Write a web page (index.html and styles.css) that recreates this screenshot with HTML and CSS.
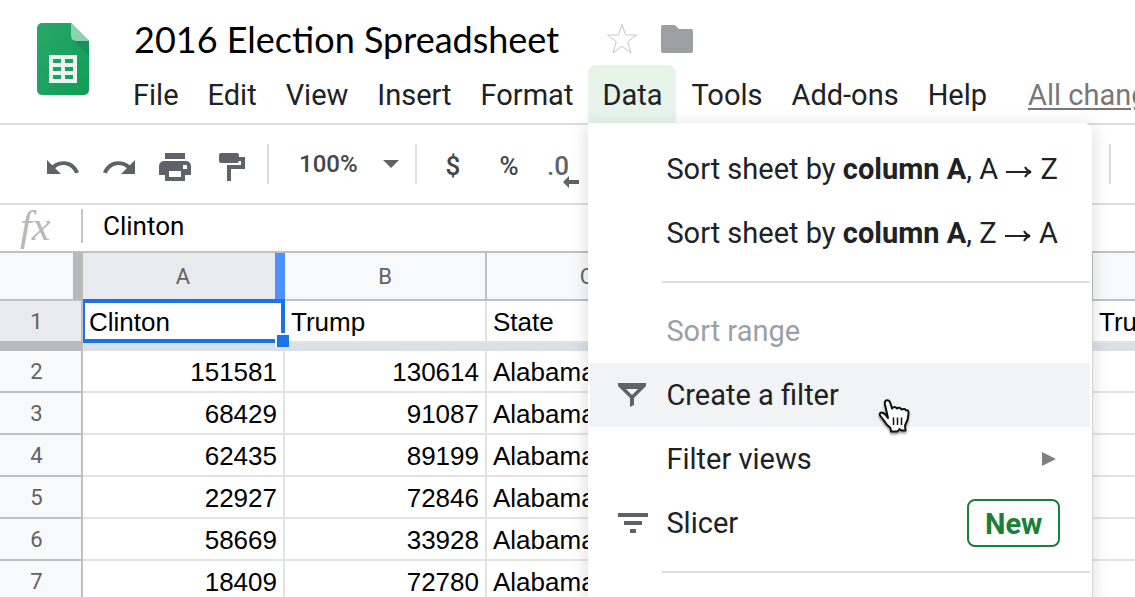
FILE: index.html
```html
<!DOCTYPE html>
<html lang="en">
<head>
<meta charset="utf-8">
<title>2016 Election Spreadsheet</title>
<meta name="viewport" content="width=device-width, initial-scale=1">
<link rel="stylesheet" href="styles.css">
</head>
<body>
<header class="header">
  <a class="logo" href="#" aria-label="Sheets home">
    <svg width="52" height="72" viewBox="0 0 52 72">
      <defs>
        <linearGradient id="sheet" x1="0" y1="0" x2="1" y2="1"><stop offset="0" stop-color="#2aa76a"/><stop offset="1" stop-color="#0f9d58"/></linearGradient>
        <linearGradient id="shade" x1="0" y1="0" x2="1" y2="1"><stop offset="0" stop-color="#1b8560"/><stop offset="1" stop-color="#159a5b"/></linearGradient>
      </defs>
      <path fill="url(#sheet)" d="M5 0H34L52 18V67a5 5 0 0 1-5 5H5a5 5 0 0 1-5-5V5a5 5 0 0 1 5-5z"/>
      <path fill="url(#shade)" d="M35.500 16.500L52 33V18H39z"/>
      <path fill="#8ed1b1" d="M34 0L52 18H39a5 5 0 0 1-5-5z"/>
      <path fill="#f1f1f1" fill-rule="evenodd" d="M12 32H40V60H12zM16 36V40H24V36zM28 36V40H36V36zM16 44V48H24V44zM28 44V48H36V44zM16 52V56H24V52zM28 52V56H36V52z"/>
    </svg>
  </a>
  <div class="header-main">
    <div class="title-row">
      <h1 class="title">2016 Election Spreadsheet</h1>
      <button class="icon-button" aria-label="Star">
        <svg width="32" height="32" viewBox="0 0 32 32" fill="none" stroke="#c6c6c6" stroke-width="1"><path d="M16 1.500L19.500 12H30.500L21.700 18.700L25 30L16 23.200L7 30L10.300 18.700L1.500 12H12.500z"/></svg>
      </button>
      <button class="icon-button" aria-label="Move to folder">
        <svg width="32" height="28" viewBox="0 0 32 28"><path fill="#9e9fa3" d="M2 0H14L18 4H30a2 2 0 0 1 2 2V26a2 2 0 0 1-2 2H2a2 2 0 0 1-2-2V2a2 2 0 0 1 2-2z"/></svg>
      </button>
    </div>
    <nav class="menubar" aria-label="Main menu">
      <button class="menu-tab">File</button>
      <button class="menu-tab">Edit</button>
      <button class="menu-tab">View</button>
      <button class="menu-tab">Insert</button>
      <button class="menu-tab">Format</button>
      <div class="menu-anchor">
        <button class="menu-tab menu-tab-open" aria-expanded="true">Data</button>
        <div class="menu" role="menu">
          <button class="menu-item" role="menuitem"><span>Sort sheet by <b>column A</b>, A <svg class="arrow" width="26" height="14" viewBox="0 0 26 14" role="img" aria-label="to"><path d="M0 7H24M19 2Q21 6 25 7Q21 8 19 12"/></svg> Z</span></button>
          <button class="menu-item" role="menuitem"><span>Sort sheet by <b>column A</b>, Z <svg class="arrow" width="26" height="14" viewBox="0 0 26 14" role="img" aria-label="to"><path d="M0 7H24M19 2Q21 6 25 7Q21 8 19 12"/></svg> A</span></button>
          <hr class="menu-line">
          <button class="menu-item" role="menuitem" disabled>Sort range</button>
          <button class="menu-item menu-item-active" role="menuitem">
            <svg class="menu-icon" width="30" height="24" viewBox="0 0 30 24"><path fill="#5f6368" fill-rule="evenodd" d="M0 0H28V3L16 15V22L12 24V15L0 3zM8 6L14 12L20 6z"/></svg>
            Create a filter
            <svg class="pointer" width="34" height="38" viewBox="0 0 34 38"><path fill="#fff" stroke="#111" stroke-width="2" stroke-linejoin="round" d="M10 20L7 6.500Q6.300 2.500 9 2.200Q11.500 2 12.300 5L14 10.500Q16.500 7.500 19 10.500Q21.500 8.500 23.500 11.500Q27 10 28 12.500Q30.500 11.500 30.500 14.500Q30.700 21 27 27.500L27.500 32.500H23.500L21.500 31L19.500 33.500H13L12.500 30Q8 26.500 5.500 22L2 17.500Q1 14.500 4 14.500Q7.500 15.500 10 20z"/><path fill="none" stroke="#111" stroke-width="1.500" d="M15.500 19.500V27M19.500 19.500V27M23.500 19.500V27"/></svg>
          </button>
          <button class="menu-item" role="menuitem" aria-haspopup="true">Filter views
            <svg class="submenu" width="14" height="14" viewBox="0 0 14 14"><path fill="#808080" d="M0 0L14 7L0 14z"/></svg>
          </button>
          <button class="menu-item" role="menuitem">
            <svg class="menu-icon" width="30" height="20" viewBox="0 0 30 20"><path fill="#5f6368" d="M0 0H30V4H0zM6 8H24V12H6zM12 16H18V20H12z"/></svg>
            Slicer
            <span class="badge">New</span>
          </button>
          <hr class="menu-line">
        </div>
      </div>
      <button class="menu-tab">Tools</button>
      <button class="menu-tab">Add-ons</button>
      <button class="menu-tab">Help</button>
      <a class="save-state" href="#">All changes</a>
    </nav>
  </div>
</header>

<div class="toolbar" role="toolbar" aria-label="Formatting">
  <button class="tool" aria-label="Undo"><svg width="32" height="14" viewBox="0 0 32 14"><path fill="#5f6368" d="M0 0L5.200 5.200C8.500 2.500 12.500 1.200 16.800 1.200C23.800 1.200 29.500 5.800 32 12.200L28.200 13.500C26.300 8.500 21.800 4.900 16.800 4.900C13.500 4.900 10.500 6 8.200 8.200L14 14H0z"/></svg></button>
  <button class="tool" aria-label="Redo"><svg width="32" height="14" viewBox="0 0 32 14"><path fill="#5f6368" d="M32 0L26.800 5.200C23.500 2.500 19.500 1.200 15.200 1.200C8.200 1.200 2.500 5.800 0 12.200L3.800 13.500C5.700 8.500 10.200 4.900 15.200 4.900C18.500 4.900 21.500 6 23.800 8.200L18 14H32z"/></svg></button>
  <button class="tool" aria-label="Print"><svg width="32" height="28" viewBox="0 0 32 28"><path fill="#5f6368" fill-rule="evenodd" d="M6 0H26V6H6zM5 8H27a5 5 0 0 1 5 5V22H26V28H6V22H0V13a5 5 0 0 1 5-5zM10 18V24H22V18zM24 12V16H28V12z"/></svg></button>
  <button class="tool" aria-label="Paint format"><svg width="32" height="28" viewBox="0 0 32 28"><path fill="#5f6368" d="M6 0H22a2 2 0 0 1 2 2V4H30V16H16V28H12V12H26V8H24a2 2 0 0 1-2 2H6a2 2 0 0 1-2-2V2a2 2 0 0 1 2-2z"/></svg></button>
  <span class="divider"></span>
  <button class="tool-zoom" aria-label="Zoom">100% <svg width="16" height="8" viewBox="0 0 16 8"><path fill="#5f6368" d="M0 0H16L8 8z"/></svg></button>
  <span class="divider"></span>
  <button class="tool tool-text" aria-label="Format as currency">$</button>
  <button class="tool tool-text" aria-label="Format as percent">%</button>
  <button class="tool tool-text decimals" aria-label="Decrease decimal places">.0<svg class="decimals-arrow" width="16" height="12" viewBox="0 0 16 12"><path fill="#5f6368" d="M6 0V4H16V8H6V12L0 6z"/></svg></button>
  <button class="tool-more" aria-label="More formats"><svg width="16" height="8" viewBox="0 0 16 8"><path fill="#5f6368" d="M0 0H16L8 8z"/></svg></button>
  <span class="divider"></span>
</div>

<div class="formula-bar">
  <label class="fx" for="formula">fx</label>
  <input class="formula" id="formula" type="text" value="Clinton">
</div>

<main class="sheet">
  <table class="grid">
    <colgroup><col class="col-index"><col><col><col><col><col><col></colgroup>
    <thead>
      <tr><td class="corner"></td><th class="active" scope="col">A<span class="resizer"></span></th><th scope="col">B</th><th scope="col">C</th><th scope="col"></th><th scope="col"></th><th scope="col"></th></tr>
    </thead>
    <tbody>
      <tr class="frozen"><th class="active" scope="row">1</th><td class="selected">Clinton<span class="fill-handle"></span></td><td>Trump</td><td>State</td><td></td><td></td><td>Trump</td></tr>
      <tr class="freeze-bar"><th></th><td colspan="6"></td></tr>
      <tr><th scope="row">2</th><td class="num">151581</td><td class="num">130614</td><td>Alabama</td><td></td><td></td><td></td></tr>
      <tr><th scope="row">3</th><td class="num">68429</td><td class="num">91087</td><td>Alabama</td><td></td><td></td><td></td></tr>
      <tr><th scope="row">4</th><td class="num">62435</td><td class="num">89199</td><td>Alabama</td><td></td><td></td><td></td></tr>
      <tr><th scope="row">5</th><td class="num">22927</td><td class="num">72846</td><td>Alabama</td><td></td><td></td><td></td></tr>
      <tr><th scope="row">6</th><td class="num">58669</td><td class="num">33928</td><td>Alabama</td><td></td><td></td><td></td></tr>
      <tr><th scope="row">7</th><td class="num">18409</td><td class="num">72780</td><td>Alabama</td><td></td><td></td><td></td></tr>
    </tbody>
  </table>
</main>
</body>
</html>
```

FILE: styles.css
```css
* { box-sizing: border-box; }

body {
  margin: 0;
  height: 100vh;
  overflow: hidden;
  background: #fff;
  color: #202124;
  font-family: Roboto, "Liberation Sans", sans-serif;
  font-size: 29px;
}

button, input {
  margin: 0;
  padding: 0;
  border: 0;
  background: none;
  color: inherit;
  font: inherit;
}

svg { display: block; flex: none; }

/* Header */
.header {
  display: flex;
  gap: 30px;
  padding-left: 37px;
  border-bottom: 2px solid #dadce0;
}
.logo { flex: none; padding-top: 23px; }
.header-main { flex: 1; min-width: 0; }
.title-row {
  display: flex;
  align-items: center;
  height: 65px;
  padding: 12px 0 0 15px;
}
.title {
  margin: 0 47px 0 0;
  color: #000;
  font-family: Lato, Roboto, sans-serif;
  font-size: 36px;
  font-weight: 400;
  line-height: 48px;
  white-space: nowrap;
}
.icon-button { margin-right: 23px; }

.menubar { display: flex; gap: 1px; height: 58px; }
.menu-anchor { position: relative; display: flex; }
.menu-tab {
  flex: none;
  height: 58px;
  padding: 2px 14px 0;
  border-radius: 8px 8px 0 0;
  line-height: 56px;
}
.menu-tab-open { background: #e6f4ea; }
.save-state {
  flex: 1;
  min-width: 0;
  overflow: hidden;
  padding-left: 26px;
  color: #777;
  line-height: 60px;
  white-space: nowrap;
  text-underline-offset: 3px;
}

/* Drop-down menu */
.menu {
  position: absolute;
  z-index: 5;
  top: 58px;
  left: 0;
  width: 504px;
  padding: 14px 2px;
  border-radius: 0 8px 8px 8px;
  background: #fff;
  box-shadow: 0 4px 16px 2px rgba(60, 64, 67, 0.16);
}
.menu-item {
  position: relative;
  display: flex;
  align-items: center;
  width: 100%;
  height: 64px;
  padding: 0 30px 0 76px;
  text-align: left;
  white-space: nowrap;
}
.menu-item:disabled { color: #9aa0a6; }
.menu-item-active { background: #f1f3f4; }
.menu-line {
  height: 2px;
  margin: 16px 0 16px 72px;
  border: 0;
  background: #dadce0;
}
.menu-icon { width: 30px; margin: 0 18px 0 -48px; }
.arrow {
  display: inline-block;
  margin: 0 1px;
  fill: none;
  stroke: #202124;
  stroke-width: 2px;
}
.submenu { margin: 0 4px 0 auto; }
.badge {
  margin-left: auto;
  padding: 2px 16px 0;
  border: 2px solid #188038;
  border-radius: 8px;
  color: #188038;
  font-weight: 700;
  line-height: 42px;
}
.pointer {
  position: absolute;
  z-index: 1;
  top: 35px;
  left: 288px;
  filter: drop-shadow(0 2px 1px rgba(0, 0, 0, 0.4));
}

/* Toolbar */
.toolbar {
  display: flex;
  align-items: center;
  height: 80px;
  padding-left: 35px;
  border-bottom: 2px solid #dadce0;
  color: #444746;
  font-size: 24px;
  font-weight: 500;
}
.tool {
  display: flex;
  flex: none;
  align-items: center;
  justify-content: center;
  width: 56px;
  height: 56px;
  padding-top: 6px;
}
.tool-text { padding-top: 4px; font-size: 26px; }
.divider { flex: none; width: 2px; height: 40px; background: #dadce0; }
.tool + .divider { margin-left: 8px; }
.tool-zoom {
  display: flex;
  flex: none;
  align-items: center;
  justify-content: space-between;
  width: 146px;
  padding: 0 16px 0 30px;
}
.tool-zoom + .divider { margin-right: 8px; }
.decimals { position: relative; padding-right: 14px; color: #5f6368; }
.decimals-arrow { position: absolute; right: 14px; bottom: 4px; }
.tool-more { flex: none; margin: 0 17px 0 483px; }

/* Formula bar */
.formula-bar {
  display: flex;
  align-items: center;
  height: 48px;
  padding-bottom: 4px;
  border-bottom: 2px solid #c0c0c0;
}
.fx {
  flex: none;
  width: 83px;
  padding-left: 20px;
  border-right: 2px solid #c6c6c6;
  color: #b8b8b8;
  font-family: "Liberation Serif", serif;
  font-size: 42px;
  font-style: italic;
  line-height: 34px;
}
.formula {
  flex: 1;
  min-width: 0;
  padding-left: 20px;
  color: #000;
  font-size: 26px;
}

/* Grid */
.sheet { overflow: hidden; }
.grid {
  width: 1295px;
  border-spacing: 0;
  table-layout: fixed;
  color: #000;
  font-family: "Liberation Sans", Arial, sans-serif;
  font-size: 26px;
  line-height: 30px;
}
.col-index { width: 83px; }
.grid td {
  height: 42px;
  padding: 2px 6px 0;
  border: solid #e2e3e3;
  border-width: 0 2px 2px 0;
}
.grid th {
  height: 42px;
  padding: 2px 0 0;
  border: solid #c0c0c0;
  border-width: 0 2px 2px 0;
  background: #f8f9fa;
  color: #5f6368;
  font-family: Roboto, sans-serif;
  font-size: 22px;
  font-weight: 400;
}
.grid tbody th { padding-right: 8px; }
.grid thead th { position: relative; height: 48px; }
.grid .corner {
  height: 48px;
  border-color: #c0c0c0;
  border-right: 10px solid #b9b9b9;
  background: #f8f9fa;
}
.grid .active { background: #e8eaed; }
.grid .num { text-align: right; }
.grid .frozen th { border-bottom-color: #b9b9b9; }
.grid .freeze-bar th,
.grid .freeze-bar td {
  height: 8px;
  padding: 0;
  border-width: 0 2px 0 0;
  background: #dadfe8;
}
.grid .freeze-bar th { background: #b9b9b9; }

.resizer {
  position: absolute;
  top: 0;
  right: -2px;
  width: 10px;
  height: 48px;
  background: #4d90fe;
}
.selected { position: relative; }
.selected::after {
  content: "";
  position: absolute;
  inset: -2px -2px -2px 0;
  border: 4px solid #1a73e8;
  border-left-width: 2px;
}
.fill-handle {
  position: absolute;
  z-index: 1;
  right: -6px;
  bottom: -6px;
  width: 14px;
  height: 14px;
  border: solid #fff;
  border-width: 2px 0 0 2px;
  background: #1a73e8;
}
```
